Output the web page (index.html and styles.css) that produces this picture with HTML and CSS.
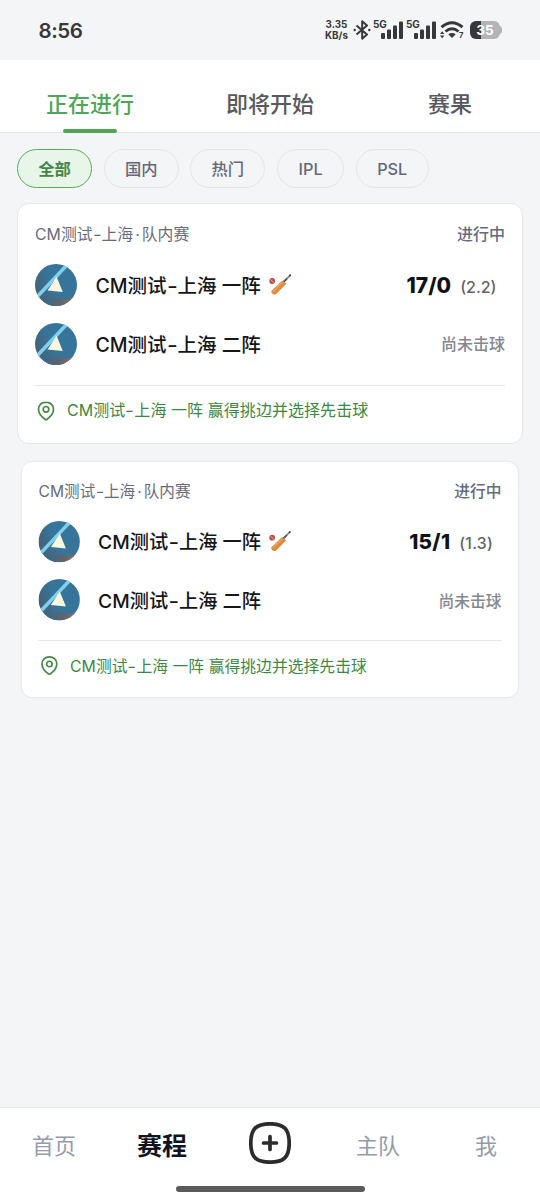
FILE: index.html
```html
<!DOCTYPE html>
<html lang="zh-CN">
<head>
<meta charset="utf-8">
<title>赛程</title>
<link rel="stylesheet" href="styles.css">
</head>
<body>
<svg class="defs" width="0" height="0" aria-hidden="true">
  <defs>
    <linearGradient id="sea" x1="0" y1=".65" x2=".4" y2=".5"><stop offset="0" stop-color="#466073"/><stop offset="1" stop-color="#37749a"/></linearGradient>
    <linearGradient id="sand" x1="0" y1="0" x2="1" y2="0"><stop offset="0" stop-color="#37698a"/><stop offset=".5" stop-color="#5d646d"/><stop offset="1" stop-color="#94735f"/></linearGradient>
    <clipPath id="disc"><circle cx="21" cy="21" r="21"/></clipPath>
    <symbol id="team" viewBox="0 0 42 42">
      <g clip-path="url(#disc)">
        <rect width="42" height="42" fill="url(#sea)"/>
        <path d="M8 37C15 33 21 33 27 35 33 36.500 37 34 42 31V42H8Z" fill="url(#sand)"/>
        <path d="M1.500 33.500 31.500 1.500" stroke="#7fd0ee" stroke-width="3.600"/>
        <path d="M21.500 12.500 27.800 28 12.500 26.500 18.500 17.500Z" fill="#f7f7df"/>
      </g>
    </symbol>
    <symbol id="bat" viewBox="0 0 24 24">
      <circle cx="4.200" cy="8" r="2.900" fill="#b35248"/>
      <path d="M2.600 6.600 5.800 9.600" stroke="#efc4b8" stroke-width=".8"/>
      <path d="M15.500 9 21.500 3" stroke="#9b8a86" stroke-width="1.800"/>
      <path d="M15.500 9 19 5.500" stroke="#3b4556" stroke-width="1.800" stroke-dasharray="1.500 .5"/>
      <path d="M21.800 2.700 22.300 2.200" stroke="#4b3434" stroke-width="1.800" stroke-linecap="round"/>
      <path d="M14.300 7.400 18.400 10.800 8.500 20.800Q6.300 22.600 4.200 20.600 2.400 18.800 3.700 17.500Z" fill="#dc8d43"/>
      <path d="M14.500 9 5 18.200" stroke="#eba55f" stroke-width="1.300"/>
    </symbol>
    <symbol id="pin" viewBox="0 0 18 20">
      <path d="M9 1.100C4.700 1.100 1.500 4.200 1.500 8.300 1.500 12.700 5 16.200 8 18.300Q9 19 10 18.300C13 16.200 16.500 12.700 16.500 8.300 16.500 4.200 13.300 1.100 9 1.100Z"/>
      <circle cx="9" cy="8.300" r="2.800"/>
    </symbol>
  </defs>
</svg>

<div class="screen">
  <header class="status">
    <span class="clock">8:56</span>
    <div class="indicators">
      <div class="speed"><span>3.35</span><span>KB/s</span></div>
      <svg class="bluetooth" viewBox="0 0 18 20"><path d="M3.500 5.500 14 14.500 9.200 18.700V1.300L14 5.500 3.500 14.500" fill="none" stroke="#38383b" stroke-width="2" stroke-linejoin="round"/><circle cx="1.700" cy="10" r="1.200"/><circle cx="16.300" cy="10" r="1.200"/></svg>
      <div class="cell"><span>5G</span><svg viewBox="0 0 22 18"><rect x="0" y="12" width="4" height="6" rx="1"/><rect x="6" y="8.500" width="4" height="9.500" rx="1"/><rect x="12" y="4.500" width="4" height="13.500" rx="1"/><rect x="18" y="0.500" width="4" height="17.500" rx="1"/></svg></div>
      <div class="cell"><span>5G</span><svg viewBox="0 0 22 18"><rect x="0" y="12" width="4" height="6" rx="1"/><rect x="6" y="8.500" width="4" height="9.500" rx="1"/><rect x="12" y="4.500" width="4" height="13.500" rx="1"/><rect x="18" y="0.500" width="4" height="17.500" rx="1"/></svg></div>
      <div class="wifi"><svg viewBox="0 0 24 18"><path d="M1.500 6.200Q12-2.800 22.500 6.200" fill="none" stroke="#38383b" stroke-width="2.900"/><path d="M5.500 10.500Q12 4.800 18.500 10.500" fill="none" stroke="#38383b" stroke-width="2.900"/><path d="M8.300 13.300Q12 10.600 15.700 13.300L12 17Z"/><path d="M0 13 2.200 10.300 4.400 13ZM0 14.500H4.400L2.200 17.200Z"/></svg><span>7</span></div>
      <div class="battery"><span>35</span></div>
    </div>
  </header>

  <nav class="tabs">
    <a class="tab tab-active">正在进行</a>
    <a class="tab">即将开始</a>
    <a class="tab">赛果</a>
  </nav>

  <main class="content">
    <div class="chips">
      <span class="chip chip-active">全部</span>
      <span class="chip">国内</span>
      <span class="chip">热门</span>
      <span class="chip chip-ipl">IPL</span>
      <span class="chip chip-psl">PSL</span>
    </div>

    <article class="card">
      <div class="card-head"><span class="league">CM测试<i class="dash">-</i>上海<i class="dot">·</i>队内赛</span><span class="state">进行中</span></div>
      <div class="team"><svg class="logo"><use href="#team"/></svg><span class="name">CM测试<i class="dash">-</i>上海 一阵</span><svg class="bat"><use href="#bat"/></svg><span class="score">17/0</span><span class="overs">(2.2)</span></div>
      <div class="team"><svg class="logo"><use href="#team"/></svg><span class="name">CM测试<i class="dash">-</i>上海 二阵</span><span class="waiting">尚未击球</span></div>
      <div class="toss"><svg class="pin"><use href="#pin"/></svg><span class="result">CM测试<i class="dash">-</i>上海 一阵 赢得挑边并选择先击球</span></div>
    </article>

    <article class="card card-pressed">
      <div class="card-head"><span class="league">CM测试<i class="dash">-</i>上海<i class="dot">·</i>队内赛</span><span class="state">进行中</span></div>
      <div class="team"><svg class="logo"><use href="#team"/></svg><span class="name">CM测试<i class="dash">-</i>上海 一阵</span><svg class="bat"><use href="#bat"/></svg><span class="score score-wide">15/1</span><span class="overs overs-wide">(1.3)</span></div>
      <div class="team"><svg class="logo"><use href="#team"/></svg><span class="name">CM测试<i class="dash">-</i>上海 二阵</span><span class="waiting">尚未击球</span></div>
      <div class="toss"><svg class="pin"><use href="#pin"/></svg><span class="result">CM测试<i class="dash">-</i>上海 一阵 赢得挑边并选择先击球</span></div>
    </article>
  </main>

  <footer class="bottom">
    <nav class="menu">
      <a>首页</a>
      <a class="menu-active">赛程</a>
      <a class="add"><svg viewBox="0 0 42 42"><path d="M21 1.800C35 1.800 40.200 7 40.200 21S35 40.200 21 40.200 1.800 35 1.800 21 7 1.800 21 1.800Z"/><path d="M21 14.500V27.500M14.500 21H27.500"/></svg></a>
      <a>主队</a>
      <a>我</a>
    </nav>
    <div class="home-bar"></div>
  </footer>
</div>
</body>
</html>
```

FILE: styles.css
```css
* { box-sizing: border-box; }
body {
  margin: 0;
  background: #f4f5f7;
  font-family: Inter, "Noto Sans CJK SC", sans-serif;
  font-weight: 500;
}
.defs { position: absolute; }
.screen {
  width: 540px;
  height: 1200px;
  display: flex;
  flex-direction: column;
  overflow: hidden;
  white-space: nowrap;
}
.status {
  height: 60px;
  flex: none;
  display: flex;
  align-items: center;
  justify-content: space-between;
  padding: 0 40px 0 38.5px;
  color: #38383b;
}
.status svg { fill: #38383b; flex: none; display: block; }
.clock { font-size: 20.5px; font-weight: 600; letter-spacing: -.4px; }
.indicators { display: flex; align-items: center; height: 20px; }
.speed {
  width: 25px;
  margin-right: 4px;
  display: flex;
  flex-direction: column;
  align-items: center;
  font-size: 9.8px;
  line-height: 11.5px;
  font-weight: 700;
}
.bluetooth { width: 18px; height: 20px; margin-right: 2px; }
.cell { display: flex; height: 18px; width: 30px; margin-right: 3px; }
.cell span { font-size: 10px; line-height: 6px; font-weight: 700; width: 8px; letter-spacing: -.2px; }
.cell svg { width: 22px; height: 18px; }
.wifi { display: flex; align-items: flex-end; width: 24px; height: 18px; margin: 0 6px 0 1px; }
.wifi svg { width: 24px; height: 18px; }
.wifi span { font-size: 7.5px; line-height: 7px; font-weight: 700; margin: 0 -4px 0 -5px; }
.battery {
  position: relative;
  width: 30px;
  height: 18px;
  border-radius: 6px;
  background: linear-gradient(90deg, #38383b 11px, #b3b4b6 11px);
  color: #fff;
  font-size: 13.5px;
  font-weight: 700;
  line-height: 18px;
  text-align: center;
}
.battery::after {
  content: "";
  position: absolute;
  right: -2px;
  top: 5px;
  width: 3px;
  height: 8px;
  border-radius: 0 3px 3px 0;
  background: #b3b4b6;
}
.tabs {
  flex: none;
  height: 73px;
  display: grid;
  grid-template-columns: repeat(3, 1fr);
  background: #fff;
  border-bottom: 1px solid #e2e4e8;
}
.tab {
  position: relative;
  text-align: center;
  font-size: 22px;
  line-height: 88px;
  color: #58595c;
}
.tab-active { color: #50a656; }
.tab-active::after {
  content: "";
  position: absolute;
  left: 63px;
  top: 69px;
  width: 54px;
  height: 4px;
  border-radius: 2px;
  background: #50a656;
}
.content { flex: 1; padding: 16px 17px 0; }
.chips { display: flex; gap: 11.7px; margin-bottom: 14.5px; }
.chip {
  width: 75px;
  height: 39px;
  border: 1px solid #e3e5e9;
  border-radius: 20px;
  text-align: center;
  font-size: 16.3px;
  line-height: 38px;
  color: #64687a;
}
.chip-ipl { width: 67px; }
.chip-psl { width: 73px; }
.chip-active {
  color: #438648;
  background: #e8f5e9;
  border-color: #5faa64;
  font-weight: 700;
}
.card {
  height: 241px;
  padding: 17px 17px 0;
  margin-bottom: 15px;
  border: 1px solid #e4e6ea;
  border-radius: 12px;
  background: #fff;
}
.card-pressed { transform: scale(.985); }
.card-head {
  display: flex;
  justify-content: space-between;
  height: 26px;
  line-height: 26px;
  font-size: 16px;
  color: #666b7b;
}
.dash {
  display: inline-block;
  font-style: normal;
  letter-spacing: 0;
  transform: scaleX(1.2);
  padding: 0 .05em;
}
.dot { font-style: normal; padding: 0 2px; }
.league { font-weight: 400; font-size: 15.8px; line-height: 28px; letter-spacing: .05px; }
.team {
  display: flex;
  align-items: center;
  height: 42px;
  margin-top: 17px;
}
.logo { width: 42px; height: 42px; flex: none; }
.name { margin: -1px 0 0 18.5px; font-size: 19.5px; letter-spacing: 0; color: #151618; }
.bat { width: 24px; height: 24px; margin-left: 7px; flex: none; }
.score { margin: 1px 0 0 auto; font-size: 21px; font-weight: 800; color: #111214; }
.score-wide { letter-spacing: .3px; }
.overs { margin: 4px 8.5px 0 9px; font-size: 16px; color: #626467; }
.overs-wide { letter-spacing: .3px; }
.waiting { margin: -1px 0 0 auto; font-size: 16px; color: #85878e; }
.toss {
  display: flex;
  align-items: center;
  height: 51px;
  margin-top: 20px;
  border-top: 1px solid #e6e7ea;
  font-size: 16px;
  font-weight: 400;
  color: #3d873f;
}
.result { margin-top: -3px; letter-spacing: .06px; }
.pin {
  width: 18px;
  height: 20px;
  margin: 0 12.5px 0 1.5px;
  fill: none;
  stroke: #438947;
  stroke-width: 1.7;
}
.bottom {
  flex: none;
  height: 93px;
  background: #fff;
  border-top: 1px solid #e9eaee;
}
.menu {
  display: grid;
  grid-template-columns: repeat(5, 1fr);
  height: 78px;
  line-height: 77px;
  text-align: center;
  font-size: 22px;
  font-weight: 400;
  color: #959ba9;
}
.menu-active { font-size: 25px; font-weight: 700; color: #111322; }
.add { padding-top: 14px; line-height: 0; }
.add svg {
  width: 42px;
  height: 42px;
  fill: none;
  stroke: #2c2c2e;
  stroke-width: 3.7;
  stroke-linecap: round;
}
.home-bar {
  width: 189px;
  height: 6px;
  margin: 0 auto;
  border-radius: 3px;
  background: #5b5b5b;
}
```
